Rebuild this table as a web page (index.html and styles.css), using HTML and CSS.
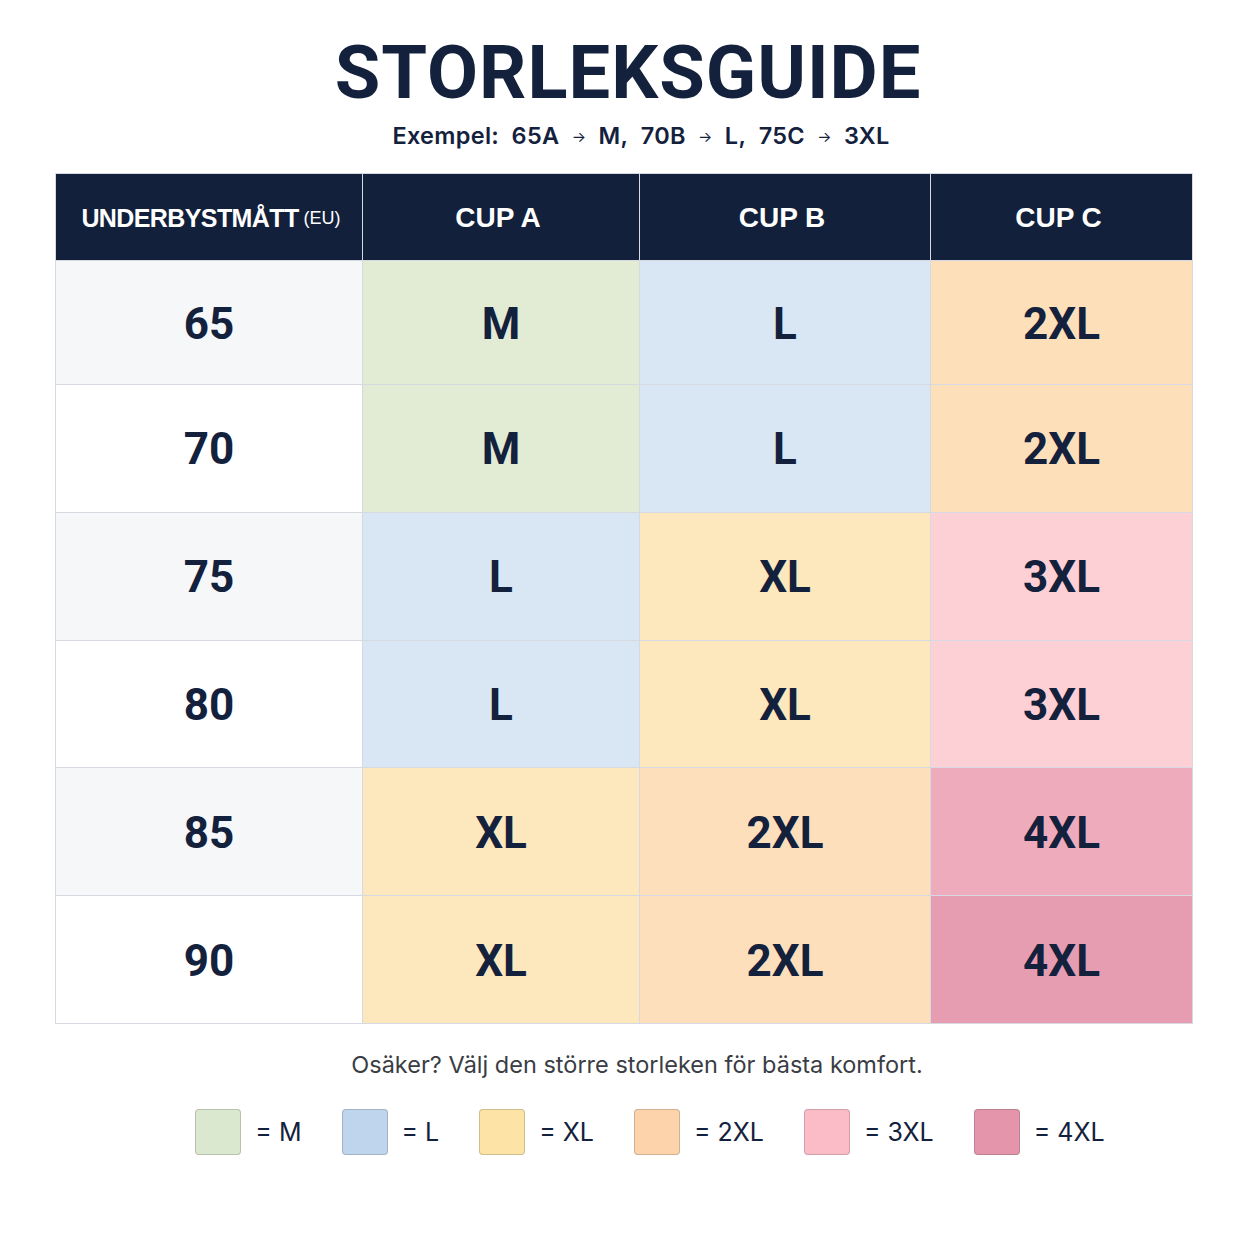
FILE: index.html
```html
<!DOCTYPE html>
<html lang="sv">
<head>
<meta charset="utf-8">
<title>Storleksguide</title>
<link rel="stylesheet" href="styles.css">
</head>
<body>
<main class="page">
  <h1 class="title">STORLEKSGUIDE</h1>
  <p class="subtitle">Exempel:&nbsp; 65A <span class="arrow">→</span> M,&nbsp; 70B <span class="arrow">→</span> L,&nbsp; 75C <span class="arrow">→</span> 3XL</p>

  <div class="table">
    <div class="th th-first">UNDERBYSTMÅTT <span class="eu">(EU)</span></div>
    <div class="th">CUP A</div>
    <div class="th">CUP B</div>
    <div class="th">CUP C</div>

    <div class="td band alt">65</div>
    <div class="td c-m">M</div>
    <div class="td c-l">L</div>
    <div class="td c-2xl">2XL</div>

    <div class="td band">70</div>
    <div class="td c-m">M</div>
    <div class="td c-l">L</div>
    <div class="td c-2xl">2XL</div>

    <div class="td band alt">75</div>
    <div class="td c-l">L</div>
    <div class="td c-xl">XL</div>
    <div class="td c-3xl">3XL</div>

    <div class="td band">80</div>
    <div class="td c-l">L</div>
    <div class="td c-xl">XL</div>
    <div class="td c-3xl">3XL</div>

    <div class="td band alt">85</div>
    <div class="td c-xl">XL</div>
    <div class="td c-2xlb">2XL</div>
    <div class="td c-4xl">4XL</div>

    <div class="td band">90</div>
    <div class="td c-xl">XL</div>
    <div class="td c-2xlb">2XL</div>
    <div class="td c-4xlb">4XL</div>
  </div>

  <p class="note">Osäker? Välj den större storleken för bästa komfort.</p>

  <ul class="legend">
    <li class="legend-item"><span class="swatch s-m"></span><span class="legend-label">= M</span></li>
    <li class="legend-item"><span class="swatch s-l"></span><span class="legend-label">= L</span></li>
    <li class="legend-item"><span class="swatch s-xl"></span><span class="legend-label">= XL</span></li>
    <li class="legend-item"><span class="swatch s-2xl"></span><span class="legend-label">= 2XL</span></li>
    <li class="legend-item"><span class="swatch s-3xl"></span><span class="legend-label">= 3XL</span></li>
    <li class="legend-item"><span class="swatch s-4xl"></span><span class="legend-label">= 4XL</span></li>
  </ul>
</main>
</body>
</html>
```

FILE: styles.css
```css
html, body {
  margin: 0;
  padding: 0;
  background: #ffffff;
}

body {
  font-family: Roboto, "Liberation Sans", Arial, sans-serif;
  color: #14213d;
}

.page {
  width: 1138px;
  margin: 0 auto;
  padding-top: 36px;
  display: flex;
  flex-direction: column;
  align-items: center;
}

.title {
  margin: 0;
  font-size: 74px;
  line-height: 74px;
  font-weight: 700;
  letter-spacing: 1px;
  color: #14213d;
  padding-left: 8px;
}

.subtitle {
  margin: 12px 0 0;
  font-family: Inter, "Liberation Sans", Arial, sans-serif;
  font-size: 23.5px;
  line-height: 28px;
  font-weight: 600;
  color: #14213d;
  letter-spacing: 0.3px;
  padding-left: 34px;
}

.arrow {
  font-size: 15px;
  font-weight: 400;
  vertical-align: 2px;
  padding: 0 6px;
}

.table {
  margin-top: 22px;
  width: 1138px;
  height: 851px;
  box-sizing: border-box;
  display: grid;
  grid-template-columns: 306px 276px 290px 1fr;
  grid-template-rows: 86px 123px repeat(5, 1fr);
  gap: 1px;
  background: #d6d9df;
  border: 1px solid #d6d9df;
}

.th {
  background: #13203b;
  color: #ffffff;
  display: flex;
  align-items: center;
  justify-content: center;
  font-family: "Liberation Sans", Arial, sans-serif;
  font-size: 28px;
  font-weight: 700;
  padding-top: 2px;
  padding-right: 6px;
}

.th-first {
  font-size: 25px;
  letter-spacing: -0.6px;
  padding-right: 0;
  padding-left: 4px;
}

.eu {
  font-size: 18px;
  font-weight: 400;
  margin-left: 5px;
  letter-spacing: 0;
}

.td {
  display: flex;
  align-items: center;
  justify-content: center;
  font-size: 44px;
  font-weight: 700;
  color: #14213d;
  padding-top: 2px;
}

.band { background: #ffffff; }
.band.alt { background: #f6f7f9; }

.c-m { background: #e2ecd5; }
.c-l { background: #d9e7f5; }
.c-xl { background: #fde8bd; }
.c-2xl { background: #fde0b9; }
.c-2xlb { background: #fddfbc; }
.c-3xl { background: #fdd0d5; }
.c-4xl { background: #eeabbc; }
.c-4xlb { background: #e69db2; }

.note {
  margin: 26px 0 0;
  font-family: Inter, "Liberation Sans", Arial, sans-serif;
  font-size: 23.5px;
  line-height: 30px;
  font-weight: 400;
  color: #3a3d44;
  padding-left: 26px;
}

.legend {
  list-style: none;
  margin: 29px 0 0;
  padding: 0 0 0 52px;
  display: flex;
  gap: 40px;
  align-items: center;
}

.legend-item {
  display: flex;
  align-items: center;
  gap: 14px;
}

.swatch {
  width: 46px;
  height: 46px;
  box-sizing: border-box;
  border-radius: 4px;
  border: 1px solid rgba(60, 60, 60, 0.22);
}

.legend-label {
  font-family: Inter, "Liberation Sans", Arial, sans-serif;
  font-size: 25px;
  font-weight: 400;
  color: #14213d;
}

.s-m { background: #dbe8d0; }
.s-l { background: #bfd5ee; }
.s-xl { background: #fde3a5; }
.s-2xl { background: #fdd3ab; }
.s-3xl { background: #fbbcc7; }
.s-4xl { background: #e494ab; }
```
